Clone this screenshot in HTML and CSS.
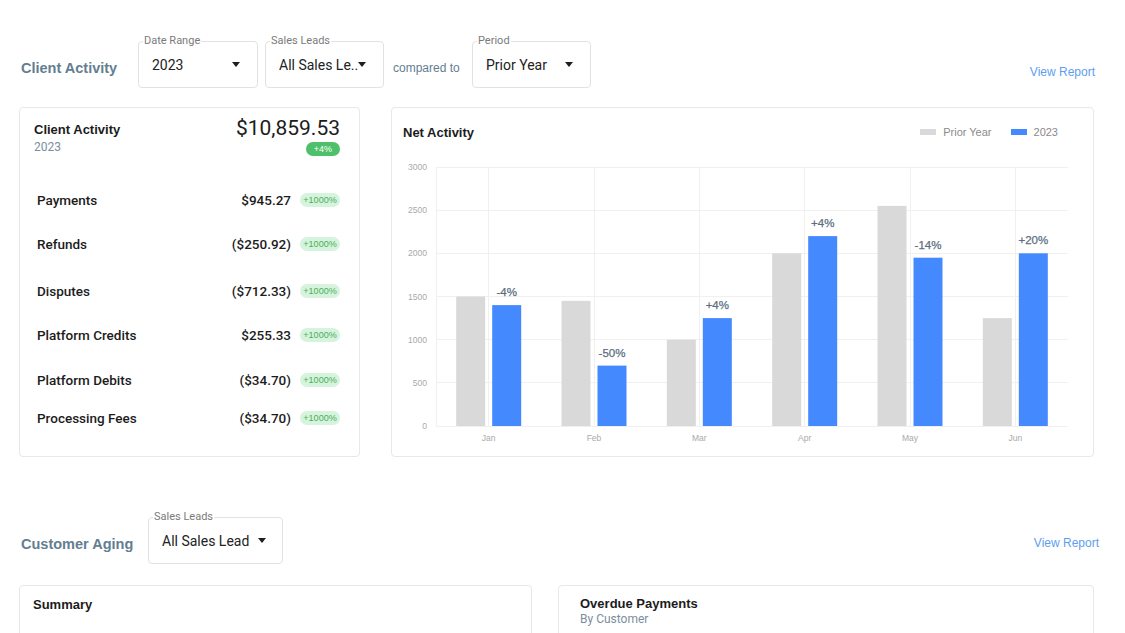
FILE: index.html
```html
<!DOCTYPE html>
<html lang="en">
<head>
<meta charset="utf-8">
<title>Dashboard</title>
<link rel="stylesheet" href="styles.css">
</head>
<body>
<main class="page">
  <section class="section">
    <div class="section-head">
      <h2 class="section-title">Client Activity</h2>
      <div class="select select-date">
        <span class="select-label">Date Range</span>
        <span class="select-value">2023</span>
        <span class="caret"></span>
      </div>
      <div class="select select-leads">
        <span class="select-label">Sales Leads</span>
        <span class="select-value">All Sales Le..</span>
        <span class="caret"></span>
      </div>
      <span class="compared">compared to</span>
      <div class="select select-period">
        <span class="select-label">Period</span>
        <span class="select-value">Prior Year</span>
        <span class="caret"></span>
      </div>
      <a class="view-report" href="#">View Report</a>
    </div>

    <div class="cards">
      <div class="card card-activity">
        <div class="ca-head">
          <div>
            <div class="card-title">Client Activity</div>
            <div class="card-sub">2023</div>
          </div>
          <div class="ca-total">
            <div class="amount">$10,859.53</div>
            <div class="badge-solid">+4%</div>
          </div>
        </div>
        <ul class="ca-rows">
          <li class="ca-row"><span class="ca-label">Payments</span><span class="ca-value">$945.27</span><span class="badge-soft">+1000%</span></li>
          <li class="ca-row"><span class="ca-label">Refunds</span><span class="ca-value">($250.92)</span><span class="badge-soft">+1000%</span></li>
          <li class="ca-row"><span class="ca-label">Disputes</span><span class="ca-value">($712.33)</span><span class="badge-soft">+1000%</span></li>
          <li class="ca-row"><span class="ca-label">Platform Credits</span><span class="ca-value">$255.33</span><span class="badge-soft">+1000%</span></li>
          <li class="ca-row"><span class="ca-label">Platform Debits</span><span class="ca-value">($34.70)</span><span class="badge-soft">+1000%</span></li>
          <li class="ca-row"><span class="ca-label">Processing Fees</span><span class="ca-value">($34.70)</span><span class="badge-soft">+1000%</span></li>
        </ul>
      </div>

      <div class="card card-chart">
        <div class="chart-head">
          <div class="card-title">Net Activity</div>
          <div class="legend">
            <span class="legend-item"><span class="swatch swatch-prior"></span>Prior Year</span>
            <span class="legend-item"><span class="swatch swatch-current"></span>2023</span>
          </div>
        </div>
        <svg class="chart" width="701" height="300" viewBox="392 155 701 300" xmlns="http://www.w3.org/2000/svg">
          <g class="grid" stroke="#f0f0f0" stroke-width="1">
            <line x1="436" y1="167.5" x2="1068" y2="167.5"/>
            <line x1="436" y1="210.5" x2="1068" y2="210.5"/>
            <line x1="436" y1="253.5" x2="1068" y2="253.5"/>
            <line x1="436" y1="296.5" x2="1068" y2="296.5"/>
            <line x1="436" y1="339.5" x2="1068" y2="339.5"/>
            <line x1="436" y1="382.5" x2="1068" y2="382.5"/>
            <line x1="436" y1="426.5" x2="1068" y2="426.5"/>
            <line x1="436.5" y1="167" x2="436.5" y2="427"/>
            <line x1="488.5" y1="167" x2="488.5" y2="427"/>
            <line x1="594.5" y1="167" x2="594.5" y2="427"/>
            <line x1="699.5" y1="167" x2="699.5" y2="427"/>
            <line x1="804.5" y1="167" x2="804.5" y2="427"/>
            <line x1="910.5" y1="167" x2="910.5" y2="427"/>
            <line x1="1015.5" y1="167" x2="1015.5" y2="427"/>
          </g>
          <g class="axis" text-anchor="end">
            <text x="427" y="170">3000</text>
            <text x="427" y="213">2500</text>
            <text x="427" y="256">2000</text>
            <text x="427" y="299.5">1500</text>
            <text x="427" y="342.5">1000</text>
            <text x="427" y="385.5">500</text>
            <text x="427" y="429">0</text>
          </g>
          <g class="axis" text-anchor="middle">
            <text x="488.7" y="440.5">Jan</text>
            <text x="594" y="440.5">Feb</text>
            <text x="699.3" y="440.5">Mar</text>
            <text x="804.7" y="440.5">Apr</text>
            <text x="910" y="440.5">May</text>
            <text x="1015.3" y="440.5">Jun</text>
          </g>
          <g fill="#d9d9d9">
            <rect x="456.2" y="296.5" width="29" height="129.5"/>
            <rect x="561.5" y="300.8" width="29" height="125.2"/>
            <rect x="666.8" y="339.7" width="29" height="86.3"/>
            <rect x="772.2" y="253.3" width="29" height="172.7"/>
            <rect x="877.5" y="205.9" width="29" height="220.1"/>
            <rect x="982.8" y="318.1" width="29" height="107.9"/>
          </g>
          <g fill="#4589ff">
            <rect x="492.2" y="305.1" width="29" height="120.9"/>
            <rect x="597.5" y="365.6" width="29" height="60.4"/>
            <rect x="702.8" y="318.1" width="29" height="107.9"/>
            <rect x="808.2" y="236.1" width="29" height="189.9"/>
            <rect x="913.5" y="257.7" width="29" height="168.3"/>
            <rect x="1018.8" y="253.3" width="29" height="172.7"/>
          </g>
          <g class="bar-label" text-anchor="middle">
            <text x="506.7" y="296">-4%</text>
            <text x="612" y="357">-50%</text>
            <text x="717.3" y="309">+4%</text>
            <text x="822.7" y="227">+4%</text>
            <text x="928" y="248.5">-14%</text>
            <text x="1033.3" y="244">+20%</text>
          </g>
        </svg>
      </div>
    </div>
  </section>

  <section class="section section-aging">
    <div class="section-head">
      <h2 class="section-title section-title-aging">Customer Aging</h2>
      <div class="select select-leads-wide">
        <span class="select-label">Sales Leads</span>
        <span class="select-value">All Sales Lead</span>
        <span class="caret"></span>
      </div>
      <a class="view-report view-report-aging" href="#">View Report</a>
    </div>
    <div class="cards cards-aging">
      <div class="card card-summary">
        <div class="card-title">Summary</div>
      </div>
      <div class="card card-overdue">
        <div class="card-title">Overdue Payments</div>
        <div class="card-sub card-sub-tight">By Customer</div>
      </div>
    </div>
  </section>
</main>
</body>
</html>
```

FILE: styles.css
```css
* { box-sizing: border-box; }

html, body {
  margin: 0;
  padding: 0;
  background: #ffffff;
}

body {
  font-family: Roboto, "Noto Sans", Arial, sans-serif;
  color: #1f1f1f;
  overflow: hidden;
}

.page {
  padding: 41px 31px 0 19px;
}

/* ---------- section header ---------- */
.section-head {
  display: flex;
  align-items: center;
  height: 47px;
}

.section-title {
  flex: 0 0 auto;
  width: 97px;
  margin: 0 20px 0 2px;
  padding-top: 7px;
  font-family: "Liberation Sans", Arial, sans-serif;
  font-size: 14.5px;
  font-weight: 700;
  color: #637e90;
  white-space: nowrap;
}

.section-title-aging {
  width: 112px;
  margin-right: 15px;
  padding-top: 6px;
}

.select {
  position: relative;
  display: flex;
  align-items: center;
  flex: 0 0 auto;
  height: 47px;
  border: 1px solid #e2e2e2;
  border-radius: 4px;
  padding: 0 17px 0 13px;
  background: #fff;
}

.select-label {
  position: absolute;
  top: -7px;
  left: 4px;
  padding: 0 1px;
  background: #fff;
  font-size: 11px;
  line-height: 12px;
  color: #7a7a7a;
  white-space: nowrap;
}

.select-value {
  font-size: 14px;
  color: #222;
  white-space: nowrap;
}

.caret {
  margin-left: auto;
  width: 0;
  height: 0;
  border-left: 4px solid transparent;
  border-right: 4px solid transparent;
  border-top: 5px solid #1f1f1f;
}

.select-date { width: 120px; margin-right: 7px; }
.select-leads { width: 119px; margin-right: 9px; }
.select-period { width: 119px; }
.select-leads-wide { width: 135px; padding-right: 16px; }

.compared {
  width: 68px;
  margin-right: 11px;
  padding-top: 7px;
  font-family: "Liberation Sans", Arial, sans-serif;
  font-size: 12px;
  color: #637e90;
  white-space: nowrap;
}

.view-report {
  margin-left: auto;
  margin-right: -1px;
  padding-top: 15px;
  font-family: "Liberation Sans", Arial, sans-serif;
  font-size: 12px;
  color: #5e9ef0;
  text-decoration: none;
}

.view-report-aging {
  margin-right: -5px;
  padding-top: 5px;
}

/* ---------- cards ---------- */
.cards {
  display: flex;
  gap: 31px;
  margin-top: 19px;
}

.card {
  border: 1px solid #e8e8e8;
  border-radius: 4px;
  background: #fff;
}

.card-title {
  font-family: "Liberation Sans", Arial, sans-serif;
  font-size: 13px;
  line-height: 16px;
  font-weight: 700;
  color: #1c1c1c;
  white-space: nowrap;
}

.card-sub {
  font-size: 12px;
  line-height: 18px;
  color: #7b8ea0;
}

.card-sub-tight {
  line-height: 14px;
}

/* client activity card */
.card-activity {
  width: 341px;
  height: 350px;
  padding: 14px 19px 0 14px;
}

.ca-head {
  display: flex;
  justify-content: space-between;
  align-items: flex-start;
}

.ca-total {
  display: flex;
  flex-direction: column;
  align-items: flex-end;
  margin-top: -6px;
}

.amount {
  font-size: 21px;
  line-height: 24px;
  color: #1c1c1c;
}

.badge-solid {
  margin-top: 2px;
  height: 14px;
  padding: 0 8px;
  border-radius: 7px;
  background: #4fc06a;
  color: #fff;
  font-family: "Liberation Sans", Arial, sans-serif;
  font-size: 9px;
  line-height: 14px;
}

.ca-rows {
  list-style: none;
  margin: 34px 0 0;
  padding: 0 0 0 2px;
}

.ca-row {
  display: flex;
  align-items: center;
  height: 20px;
  margin-top: 24px;
}

.ca-row:first-child { margin-top: 0; }
.ca-row:nth-child(3) { margin-top: 27px; }
.ca-row:nth-child(5) { margin-top: 25px; }
.ca-row:nth-child(6) { margin-top: 18px; }

.ca-label {
  flex: 1;
  padding-left: 1px;
  font-size: 13.5px;
  font-weight: 500;
  color: #1c1c1c;
  white-space: nowrap;
}

.ca-value {
  margin-right: 9px;
  font-size: 13.5px;
  font-weight: 500;
  color: #1c1c1c;
  white-space: nowrap;
}

.badge-soft {
  width: 40px;
  height: 14px;
  border-radius: 7px;
  background: #d6f3dd;
  color: #4cae5a;
  font-family: "Liberation Sans", Arial, sans-serif;
  font-size: 9px;
  line-height: 14px;
  text-align: center;
}

/* chart card */
.card-chart {
  width: 703px;
  height: 350px;
}

.chart-head {
  display: flex;
  justify-content: space-between;
  align-items: flex-start;
  height: 47px;
  padding: 17px 35px 0 11px;
}

.legend {
  display: flex;
  align-items: center;
  height: 16px;
  margin-top: -1px;
  font-family: "Liberation Sans", Arial, sans-serif;
  font-size: 11px;
  color: #8a8a8a;
}

.legend-item {
  display: flex;
  align-items: center;
  gap: 7px;
}

.legend-item + .legend-item { margin-left: 19px; }

.swatch {
  display: inline-block;
  width: 16px;
  height: 6px;
}

.swatch-prior { background: #d9d9d9; }
.swatch-current { background: #4589ff; }

.chart {
  display: block;
}

.chart .axis text {
  font-family: "Liberation Sans", Arial, sans-serif;
  font-size: 8.5px;
  fill: #a9a9a9;
}

.chart .bar-label text {
  font-family: "Liberation Sans", Arial, sans-serif;
  font-size: 11.5px;
  font-weight: 400;
  fill: #5b6e81;
  stroke: #5b6e81;
  stroke-width: 0.25px;
}

/* aging section */
.section-aging {
  margin-top: 60px;
}

.cards-aging {
  gap: 26px;
  margin-top: 21px;
}

.card-summary {
  width: 513px;
  height: 120px;
  padding: 11px 13px;
}

.card-overdue {
  width: 536px;
  height: 120px;
  padding: 10px 21px;
}
```
